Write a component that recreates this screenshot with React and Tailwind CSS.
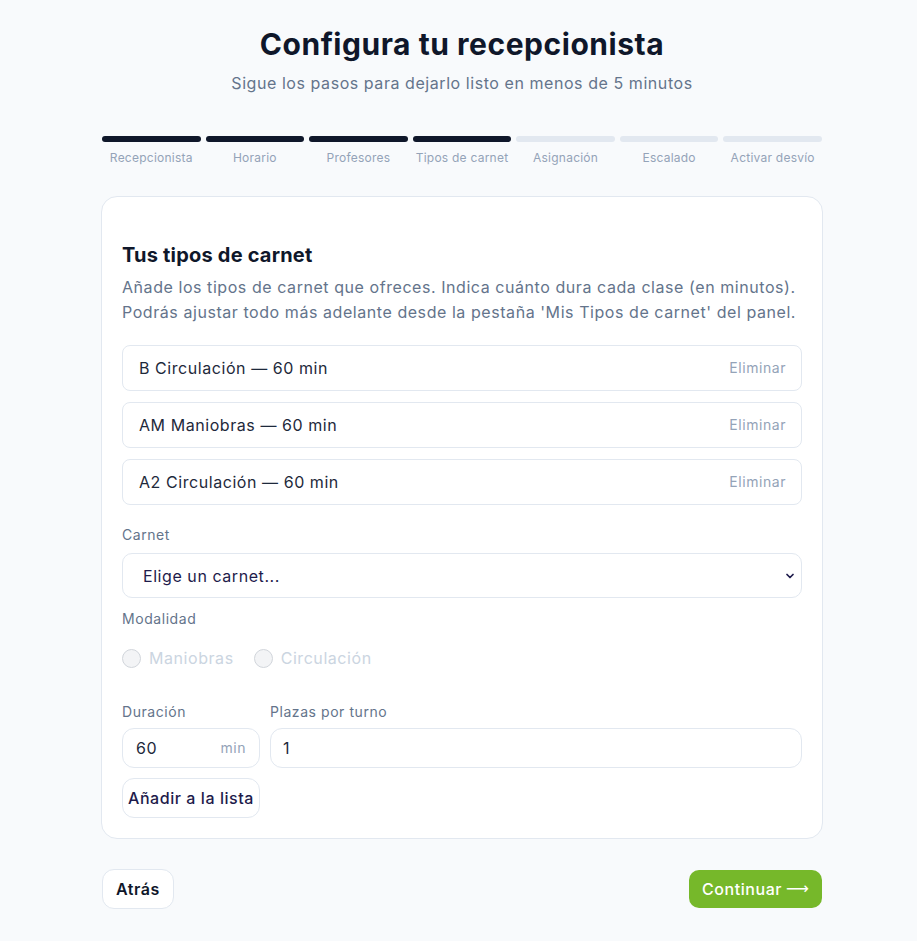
import { ChevronDown } from "lucide-react";

const steps = [
  { label: "Recepcionista", done: true },
  { label: "Horario", done: true },
  { label: "Profesores", done: true },
  { label: "Tipos de carnet", done: true },
  { label: "Asignación", done: false },
  { label: "Escalado", done: false },
  { label: "Activar desvío", done: false },
];

const carnets = ["B Circulación — 60 min", "AM Maniobras — 60 min", "A2 Circulación — 60 min"];

const App = () => {
  return (
    <div className="min-h-screen bg-[#f8fafc] font-['Inter',sans-serif] tracking-[0.035em] text-[#0f172a]">
      <div className="ml-[101px] w-[722px] pt-[26px] pb-8">
        {/* Header */}
        <div className="text-center">
          <h1 className="text-[30px] leading-9 font-bold tracking-[0.018em] text-[#0f172a]">
            Configura tu recepcionista
          </h1>
          <p className="mt-[9px] text-base text-[#64748b]">
            Sigue los pasos para dejarlo listo en menos de 5 minutos
          </p>
        </div>

        {/* Stepper */}
        <div className="mt-[41px] grid grid-cols-7 gap-[5px] px-px">
          {steps.map((s) => (
            <div key={s.label} className="flex flex-col items-center">
              <div
                className={`h-[6px] w-full rounded-full ${
                  s.done ? "bg-[#0f172a]" : "bg-[#e2e8f0]"
                }`}
              />
              <span className="mt-[8px] text-[12px] leading-4 tracking-[0.02em] text-[#94a3b8]">
                {s.label}
              </span>
            </div>
          ))}
        </div>

        {/* Card */}
        <div className="mt-[30px] rounded-2xl border border-[#e2e8f0] bg-white px-5 pt-[44px] pb-5">
          <h2 className="text-[20px] leading-7 font-bold tracking-[0.01em] text-[#0f172a]">
            Tus tipos de carnet
          </h2>
          <p className="mt-[6px] text-base leading-[25px] text-[#64748b]">
            Añade los tipos de carnet que ofreces. Indica cuánto dura cada clase (en minutos).
            <br />
            Podrás ajustar todo más adelante desde la pestaña 'Mis Tipos de carnet' del panel.
          </p>

          <ul className="mt-[20px] flex flex-col gap-[11px]">
            {carnets.map((c) => (
              <li
                key={c}
                className="flex h-[46px] items-center justify-between rounded-lg border border-[#e2e8f0] pl-4 pr-[15px]"
              >
                <span className="text-base text-[#1e293b]">{c}</span>
                <button className="text-sm text-[#94a3b8]">Eliminar</button>
              </li>
            ))}
          </ul>

          <label className="mt-[20px] block text-sm text-[#64748b]">Carnet</label>
          <div className="relative mt-[8px]">
            <select className="h-[45px] w-full appearance-none rounded-[10px] border border-[#e2e8f0] bg-white px-5 text-base tracking-[0.035em] text-[#1e1b4b] outline-none">
              <option>Elige un carnet...</option>
            </select>
            <ChevronDown
              className="pointer-events-none absolute right-[6px] top-1/2 h-3 w-3 -translate-y-1/2 text-[#1e1b4b]"
              strokeWidth={3.5}
            />
          </div>

          <label className="mt-[11px] block text-sm text-[#64748b]">Modalidad</label>
          <div className="mt-[17px] flex items-center gap-5">
            <label className="flex items-center gap-[8px] text-base text-[#cbd5e1]">
              <span className="h-[19px] w-[19px] rounded-full border border-[#d1d5db] bg-[#f3f4f6]" />
              Maniobras
            </label>
            <label className="flex items-center gap-[8px] text-base text-[#cbd5e1]">
              <span className="h-[19px] w-[19px] rounded-full border border-[#d1d5db] bg-[#f3f4f6]" />
              Circulación
            </label>
          </div>

          <div className="mt-[32px] flex gap-[10px]">
            <div className="w-[138px]">
              <label className="block text-sm text-[#64748b]">Duración</label>
              <div className="mt-[6px] flex h-[40px] items-center justify-between rounded-xl border border-[#e2e8f0] px-[13px]">
                <span className="text-base text-[#1e293b]">60</span>
                <span className="text-sm text-[#94a3b8]">min</span>
              </div>
            </div>
            <div className="flex-1">
              <label className="block text-sm text-[#64748b]">Plazas por turno</label>
              <div className="mt-[6px] flex h-[40px] items-center rounded-xl border border-[#e2e8f0] px-[12px]">
                <span className="text-base text-[#1e293b]">1</span>
              </div>
            </div>
          </div>

          <button className="mt-[10px] h-[40px] w-[138px] rounded-xl border border-[#e2e8f0] text-base font-medium text-[#1e1b4b]">
            Añadir a la lista
          </button>
        </div>

        {/* Footer actions */}
        <div className="mt-[30px] flex items-center justify-between px-px">
          <button className="h-[40px] rounded-xl border border-[#e2e8f0] bg-white px-[13px] text-base font-semibold text-[#0f172a]">
            Atrás
          </button>
          <button className="flex h-[38px] items-center gap-[4px] rounded-[10px] bg-[#76b82a] px-[13px] text-base font-medium text-white">
            Continuar
            <span className="font-['DejaVu_Sans',sans-serif] font-normal tracking-normal">⟶</span>
          </button>
        </div>
      </div>
    </div>
  );
};

export default App;
